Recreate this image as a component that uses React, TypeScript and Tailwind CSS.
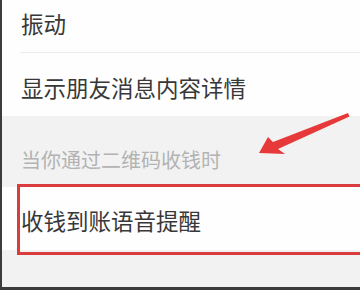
import React from 'react'

const font = { fontFamily: '"Noto Sans CJK SC", "Noto Sans", sans-serif' }

const App: React.FC = () => {
  return (
    <div className="relative w-[360px] h-[290px] overflow-hidden bg-[#f2f2f2] flex flex-col border-l-2 border-[#3c3c3c]" style={font}>
      {/* settings rows */}
      <div className="bg-[#fefefe] flex flex-col">
        <div className="h-[52px] flex items-center pl-[19px] pb-[5px] text-[22.5px] text-[#383838]">振动</div>
        <div className="ml-[18px] h-px bg-[#ebebeb]" />
        <div className="h-[63px] flex items-center pl-[19px] pt-[7px] text-[22.5px] text-[#383838]">显示朋友消息内容详情</div>
      </div>

      {/* section header */}
      <div className="h-[71px] flex items-end pl-[19px] pb-[12px] text-[20px] text-[#b3b3b3]">当你通过二维码收钱时</div>

      <div className="h-[63px] bg-[#fefefe] flex items-center pl-[19px] pt-[4px] text-[22.5px] text-[#383838]">收钱到账语音提醒</div>

      <div className="flex-1" />
      <div className="h-[3px] bg-[#3c3c3c] -ml-[2px]" />

      {/* annotation: red box, runs off the right edge */}
      <div className="absolute left-[15px] right-0 top-[184px] h-[71px] border-[3px] border-r-0 border-[#da3b3d] pointer-events-none" />

      {/* annotation: arrow */}
      <svg className="absolute left-[-2px] top-0 pointer-events-none" width="360" height="290" viewBox="0 0 360 290">
        <polygon
          points="259,153 268,137 273,142 348,113 349.5,116.5 278,149 285,154"
          fill="#e8393a"
        />
      </svg>
    </div>
  )
}

export default App
